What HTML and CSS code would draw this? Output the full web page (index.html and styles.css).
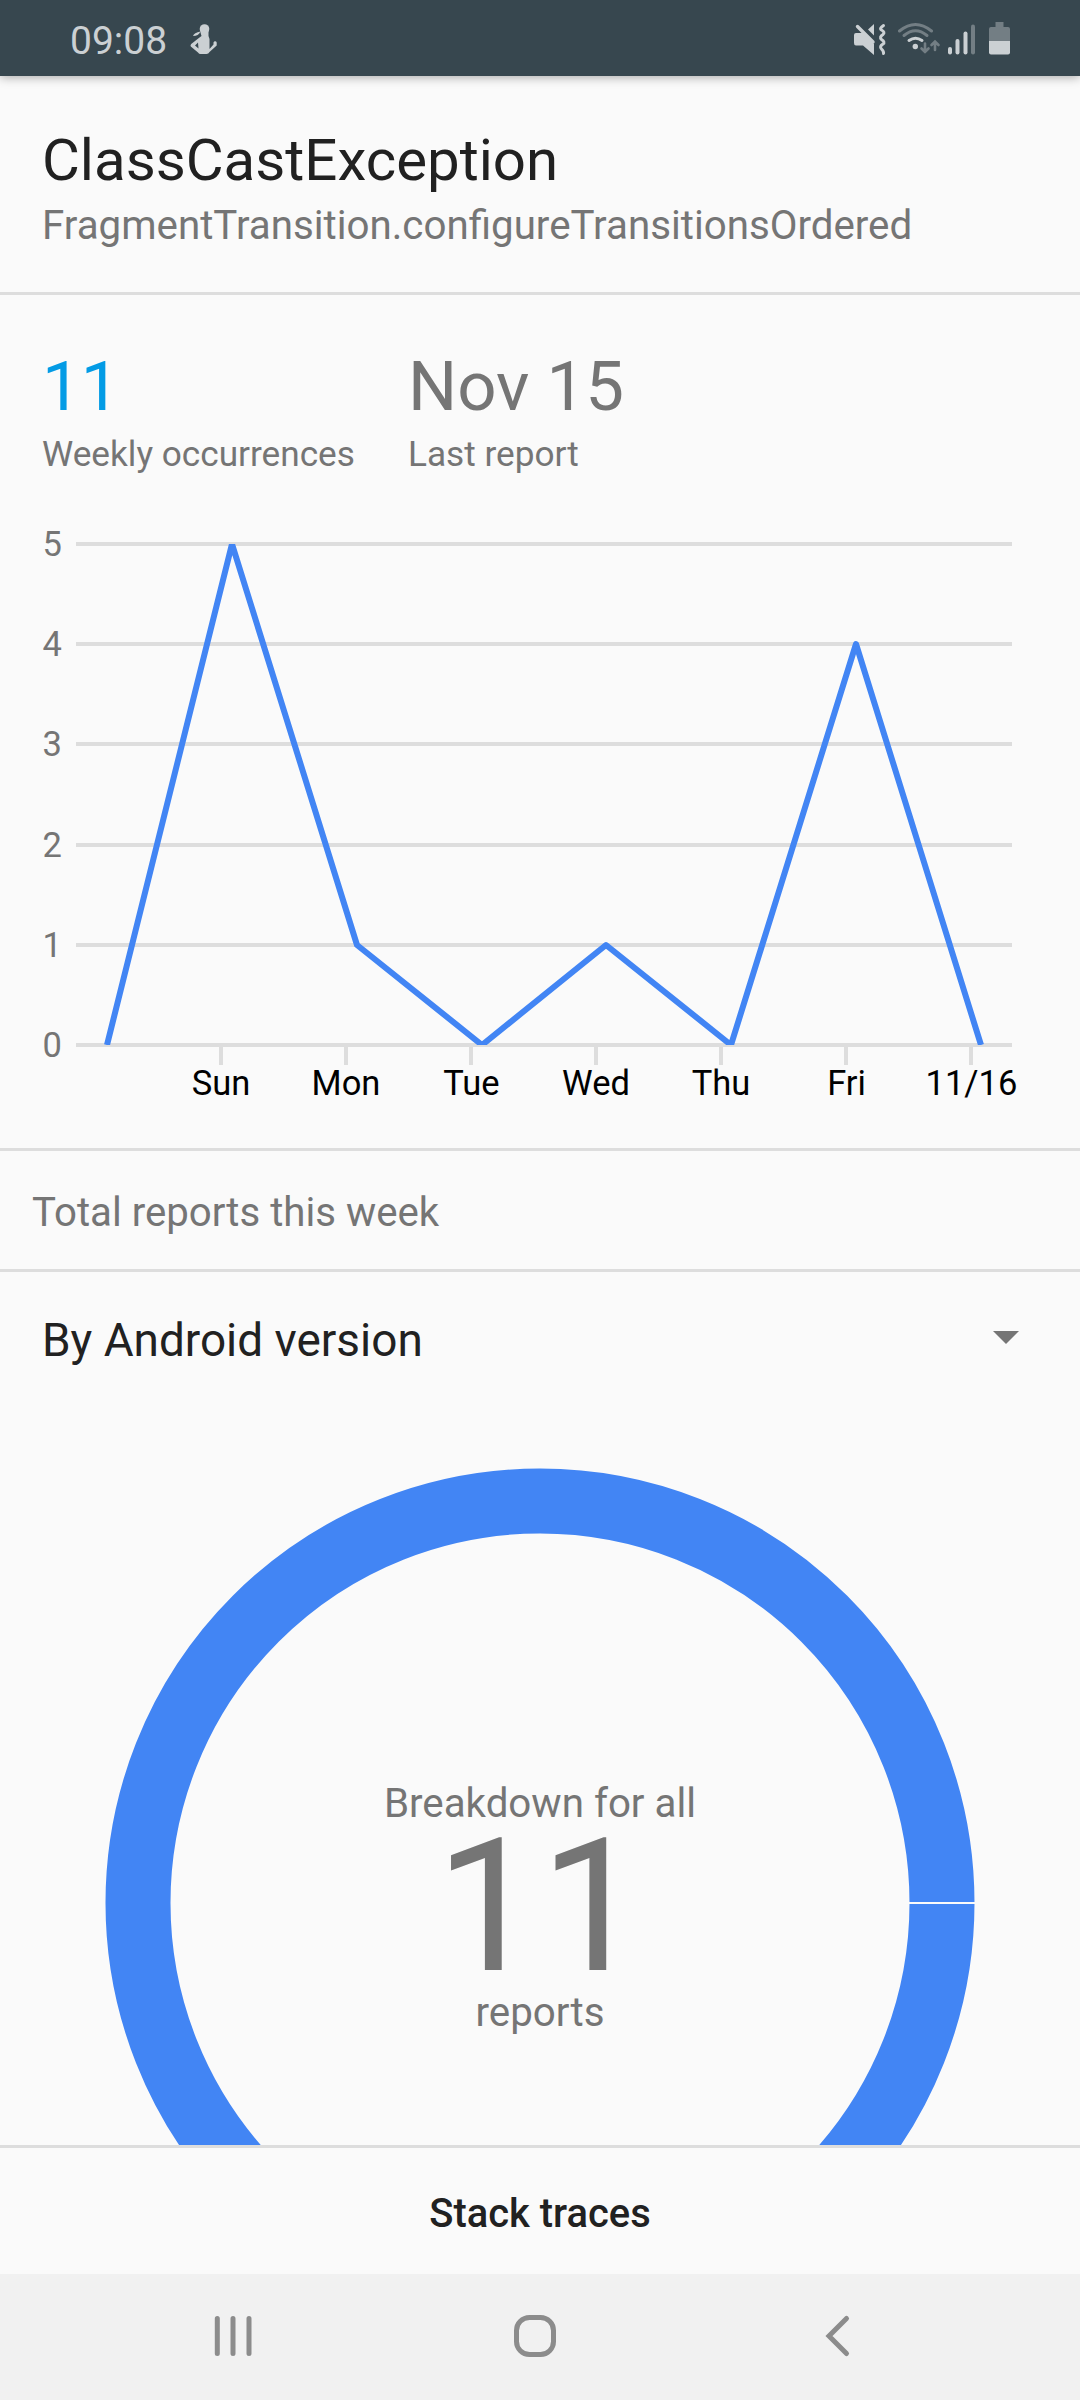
FILE: index.html
```html
<!DOCTYPE html>
<html lang="en">
<head>
<meta charset="utf-8">
<title>ClassCastException</title>
<link rel="stylesheet" href="styles.css">
</head>
<body>
<div class="screen">
  <header class="status-bar">
    <span class="clock">09:08</span>
    <svg class="notification" width="28" height="32" viewBox="0 0 28 32">
      <circle cx="14.500" cy="5" r="4.800"/>
      <path d="M10.500 6 H18.500 V12 L19.500 15 V25 L23.500 20.500 V18.500 A1.700 1.700 0 0 1 26.700 18.500 V21.500 L19.500 28 Q18.500 30 16.500 30 H10.500 Q9 30 8 28.500 L0.800 22.500 Q0 21 1.200 20 L9.500 13.500 L11.500 12 L10.500 8.500 Z M5 21.500 L8.500 24.500 L8 18.500 Z" fill-rule="evenodd"/>
      <path d="M3 12 Q4 8.500 10.500 7.500 Q8.500 12 3 12 Z"/>
    </svg>
    <svg class="indicators" width="170" height="40" viewBox="850 20 170 40">
      <path d="M856 33 H863 L874 44 V55 L863 45.500 H856 Q854 45.500 854 43 V35 Q854 33 856 33 Z"/>
      <path d="M874 24 V35.500 L868 29.500 Z"/>
      <path class="stroke" d="M857.500 26.500 L873 42" stroke-width="3.400"/>
      <path class="stroke" d="M883.500 25.500 Q879 28.500 881.500 30 Q885.500 32 883 34.500 Q879 37 881.500 39.500 Q885.500 42 883 44 Q879 46.500 881.500 49 Q884 51.500 883.500 53.500" stroke-width="3"/>
      <g class="dim">
        <path class="stroke" d="M899.500 31 Q915.500 18 931.500 31" stroke-width="3"/>
        <path class="stroke" d="M904 35.500 Q915.500 26 927 35.500" stroke-width="3"/>
        <path class="stroke" d="M925 43.500 V52 M921.500 48.500 L925 52 L928.500 48.500 M935 50 V42 M931.500 45 L935 41.500 L938.500 45" stroke-width="2.600"/>
        <rect x="971" y="24.500" width="4" height="30" rx="2"/>
        <path d="M995.500 22 H1003.500 V27 H1008 Q1010 27 1010 29 V41 H989 V29 Q989 27 991 27 H995.500 Z"/>
      </g>
      <path class="stroke" d="M909 40.500 Q915.500 36 922 40.500" stroke-width="3"/>
      <circle cx="915.300" cy="46.500" r="2.700"/>
      <rect x="948" y="47" width="4" height="7.500" rx="2"/>
      <rect x="955.500" y="39" width="4" height="15.500" rx="2"/>
      <rect x="963.500" y="31.500" width="4" height="23" rx="2"/>
      <path d="M989 41 H1010 V52.500 Q1010 54.500 1008 54.500 H991 Q989 54.500 989 52.500 Z"/>
    </svg>
  </header>

  <main class="content">
    <section class="issue">
      <h1 class="issue-title">ClassCastException</h1>
      <p class="issue-source">FragmentTransition.configureTransitionsOrdered</p>
    </section>

    <section class="activity">
      <dl class="stats">
        <div class="stat">
          <dd class="stat-value accent">11</dd>
          <dt class="stat-label">Weekly occurrences</dt>
        </div>
        <div class="stat">
          <dd class="stat-value">Nov 15</dd>
          <dt class="stat-label">Last report</dt>
        </div>
      </dl>
      <svg class="chart" width="1080" height="674" viewBox="0 474 1080 674">
        <clipPath id="plot"><rect x="76" y="544" width="936" height="501"/></clipPath>
        <path class="grid" d="M76 544H1012M76 644H1012M76 744H1012M76 845H1012M76 945H1012M76 1045H1012"/>
        <path class="grid" d="M221 1045V1065M346 1045V1065M471 1045V1065M596 1045V1065M721 1045V1065M846 1045V1065M971 1045V1065"/>
        <g class="y-labels">
          <text x="62" y="556">5</text>
          <text x="62" y="656">4</text>
          <text x="62" y="756">3</text>
          <text x="62" y="857">2</text>
          <text x="62" y="957">1</text>
          <text x="62" y="1057">0</text>
        </g>
        <g class="x-labels">
          <text x="221" y="1095">Sun</text>
          <text x="346" y="1095">Mon</text>
          <text x="471.500" y="1095">Tue</text>
          <text x="596" y="1095">Wed</text>
          <text x="721" y="1095">Thu</text>
          <text x="846.500" y="1095">Fri</text>
          <text x="971.500" y="1095">11/16</text>
        </g>
        <polyline class="series" clip-path="url(#plot)" points="107,1045 232,544 357,945 482,1045 606,945 731,1045 856,644 981,1045"/>
      </svg>
    </section>

    <h2 class="section-heading">Total reports this week</h2>

    <section class="breakdown">
      <div class="spinner">
        <span>By Android version</span>
        <svg class="caret" width="26" height="13" viewBox="0 0 26 13"><path d="M0 0H26L13 13Z"/></svg>
      </div>
      <svg class="donut" width="1080" height="738" viewBox="0 1407 1080 738">
        <circle class="ring" cx="540" cy="1903" r="402"/>
        <rect class="ring-gap" x="909" y="1902" width="66" height="2"/>
        <text class="donut-label" x="540" y="1817">Breakdown for all</text>
        <text class="donut-total" x="540" y="1970">11</text>
        <text class="donut-label" x="540" y="2026">reports</text>
      </svg>
    </section>
  </main>

  <button class="stack-traces">Stack traces</button>

  <nav class="nav-bar">
    <svg width="1080" height="126" viewBox="0 2274 1080 126">
      <path d="M217.300 2318.500V2353.500M233 2318.500V2353.500M249 2318.500V2353.500"/>
      <rect x="516.500" y="2317.500" width="37" height="37" rx="13"/>
      <path d="M846.500 2318.500L829 2336L846.500 2353.500"/>
    </svg>
  </nav>
</div>
</body>
</html>
```
FILE: styles.css
```css
* {
  box-sizing: border-box;
  margin: 0;
  padding: 0;
}

body {
  background: #fafafa;
  color: #212121;
  font-family: Roboto, sans-serif;
}

.screen {
  width: 1080px;
  height: 2400px;
  display: flex;
  flex-direction: column;
  overflow: hidden;
}

svg {
  display: block;
}

.status-bar {
  height: 76px;
  flex: none;
  display: flex;
  align-items: flex-start;
  padding: 0 60px 0 70px;
  background: #37474f;
  box-shadow: 0 1px 10px rgba(0, 0, 0, 0.35);
}

.clock {
  width: 120px;
  padding-top: 18px;
  font-size: 39px;
  line-height: 46px;
  color: #cbd0d3;
}

.notification {
  margin-top: 24px;
  fill: #cbd0d3;
}

.indicators {
  margin: 20px 0 0 auto;
  fill: #cbd0d3;
}

.indicators .stroke {
  fill: none;
  stroke: #cbd0d3;
  stroke-linecap: round;
}

.indicators .dim {
  fill: #737e84;
}

.indicators .dim .stroke {
  stroke: #737e84;
}

.content {
  flex: 1;
  min-height: 0;
  overflow: hidden;
}

.issue {
  height: 219px;
  padding: 50px 42px 0;
  border-bottom: 3px solid #ddd;
}

.issue-title {
  font-size: 58.200px;
  line-height: 68px;
  font-weight: 400;
}

.issue-source {
  margin-top: 9px;
  font-size: 40.300px;
  line-height: 46px;
  color: #757575;
}

.activity {
  height: 856px;
  border-bottom: 3px solid #ddd;
}

.stats {
  display: flex;
  gap: 53px;
  padding: 52px 42px 0;
  color: #757575;
}

.stat-value {
  font-size: 69px;
  line-height: 80px;
}

.stat-value.accent {
  color: #039be5;
}

.stat-label {
  margin-top: 7px;
  font-size: 35.200px;
  line-height: 40px;
}

.grid {
  stroke: #ddd;
  stroke-width: 4;
}

.series {
  fill: none;
  stroke: #4285f4;
  stroke-width: 6;
  stroke-linejoin: round;
}

.y-labels,
.x-labels {
  font-size: 34.500px;
}

.y-labels {
  fill: #757575;
  text-anchor: end;
}

.x-labels {
  fill: #000;
  text-anchor: middle;
}

.section-heading {
  height: 121px;
  padding: 5px 32px 0;
  border-bottom: 3px solid #ddd;
  font-size: 40.200px;
  line-height: 113px;
  font-weight: 400;
  color: #757575;
}

.spinner {
  height: 135px;
  display: flex;
  align-items: center;
  justify-content: space-between;
  padding: 0 61px 0 42px;
  font-size: 45.900px;
}

.caret {
  margin-bottom: 4px;
  fill: #757575;
}

.ring {
  fill: none;
  stroke: #4285f4;
  stroke-width: 65;
}

.ring-gap {
  fill: #fafafa;
}

.donut-label,
.donut-total {
  fill: #757575;
  text-anchor: middle;
}

.donut-label {
  font-size: 40.300px;
}

.donut-total {
  font-size: 186px;
}

.stack-traces {
  height: 129px;
  flex: none;
  padding-top: 4px;
  border: 0;
  border-top: 3px solid #ddd;
  background: #fafafa;
  color: #212121;
  font: 500 39.900px Roboto, sans-serif;
}

.nav-bar {
  height: 126px;
  flex: none;
  background: #f1f1f1;
}

.nav-bar path,
.nav-bar rect {
  fill: none;
  stroke: #8c8c8c;
  stroke-width: 5;
  stroke-linecap: round;
}
```
